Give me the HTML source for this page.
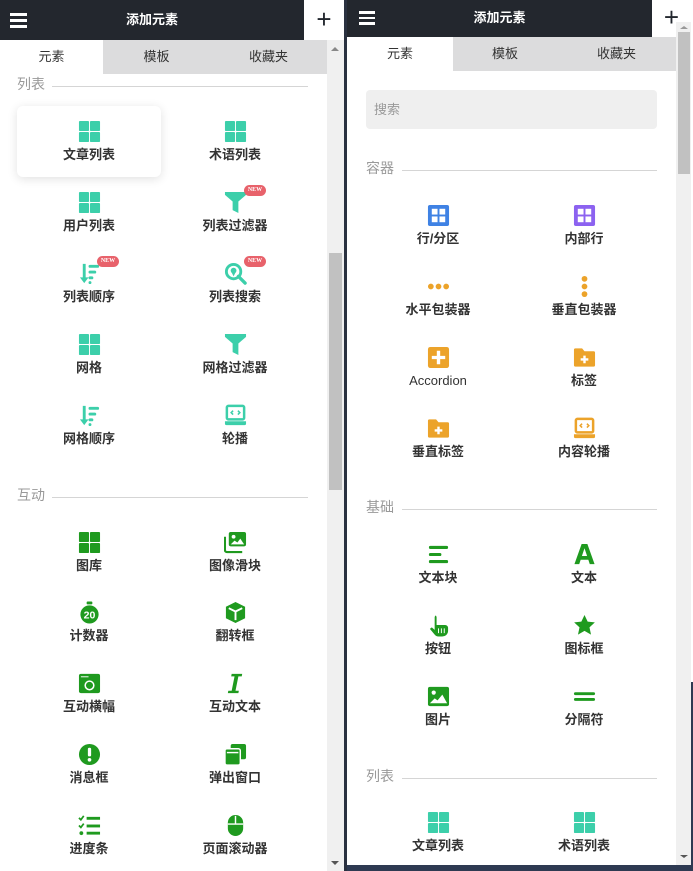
<!DOCTYPE html>
<html><head><meta charset="utf-8"><style>
*{margin:0;padding:0;box-sizing:border-box}
body{width:693px;height:871px;position:relative;overflow:hidden;background:#fff;font-family:"Liberation Sans","Noto Sans CJK SC",sans-serif}
.abs{position:absolute}
.hdr{background:#23272e;color:#fff;font-weight:bold;font-size:13px;text-align:center}
.plus{background:#fff;color:#23272e;font-size:26px;text-align:center;font-weight:300}
.tabs{background:#dcdcdd;font-size:13px;color:#333}
.tab{position:absolute;top:0;height:100%;text-align:center}
.sec{font-size:14px;color:#999}
.line{height:1px;background:#d5d5d5}
.it{position:absolute;width:120px;text-align:center}
.it svg{display:block;margin:1px auto 0;width:23px;height:23px}
.it span{display:block;margin-top:4px;font-size:13px;font-weight:bold;color:#333;line-height:16px}
.new{position:absolute;background:#e8626b;color:#fff;font-size:6px;font-weight:bold;border-radius:6px;width:22px;height:11px;line-height:11px;text-align:center;font-family:"Liberation Serif",serif}
.sb{background:#f0f0f0}
.th{background:#c1c1c1}
</style></head><body>
<svg width="0" height="0" style="position:absolute"><defs>
<g id="grid"><rect x="1" y="1" width="10.5" height="10.5" rx="1"/><rect x="12.5" y="1" width="10.5" height="10.5" rx="1"/><rect x="1" y="12.5" width="10.5" height="10.5" rx="1"/><rect x="12.5" y="12.5" width="10.5" height="10.5" rx="1"/></g>
<g id="funnel"><path d="M1 1h22v3l-8 7v12l-6-3v-9L1 4z"/></g>
<g id="sort"><path d="M5 2h3v14h3l-4.5 6L2 16h3z"/><rect x="11" y="3" width="11" height="3" rx="1.5"/><rect x="11" y="9" width="8" height="3" rx="1.5"/><rect x="11" y="15" width="5" height="3" rx="1.5"/><rect x="11" y="20" width="3" height="3" rx="1.5"/></g>
<g id="srch"><circle cx="10" cy="10" r="7.5" fill="none" stroke="currentColor" stroke-width="3"/><circle cx="10" cy="9" r="3"/><path d="M8 11l2 4 2-4z"/><path d="M15 15l7 7" stroke="currentColor" stroke-width="3.5" stroke-linecap="round"/></g>
<g id="laptop"><rect x="3" y="2" width="18" height="14" rx="1.5" fill="none" stroke="currentColor" stroke-width="2.6"/><path d="M9.5 7l-2 2 2 2M14.5 7l2 2-2 2" fill="none" stroke="currentColor" stroke-width="1.6"/><path d="M1 18h22v2.5a1.5 1.5 0 0 1-1.5 1.5h-19A1.5 1.5 0 0 1 1 20.5z"/></g>
</defs></svg>

<!-- LEFT PANEL -->
<div class="abs hdr" style="left:0;top:0;width:304px;height:40px;line-height:40px">添加元素</div>
<div class="abs" style="left:10px;top:13px;width:17px;height:2.5px;background:#fff"></div>
<div class="abs" style="left:10px;top:19px;width:17px;height:2.5px;background:#fff"></div>
<div class="abs" style="left:10px;top:25px;width:17px;height:2.5px;background:#fff"></div>
<div class="abs plus" style="left:304px;top:0;width:40px;height:40px;line-height:38px">+</div>
<div class="abs tabs" style="left:0;top:40px;width:327px;height:34px">
 <div class="tab" style="left:0;width:103px;background:#fff;line-height:34px">元素</div>
 <div class="tab" style="left:103px;width:107px;line-height:34px">模板</div>
 <div class="tab" style="left:210px;width:117px;line-height:34px">收藏夹</div>
</div>
<div class="abs sb" style="left:327px;top:40px;width:17px;height:831px"></div>
<div class="abs th" style="left:329px;top:253px;width:13px;height:237px"></div>
<div class="abs" style="left:331px;top:47px;border:4px solid transparent;border-bottom:4px solid #888;border-top:0"></div>
<div class="abs" style="left:331px;top:861px;border:4px solid transparent;border-top:4px solid #555;border-bottom:0"></div>
<div class="abs" style="left:344px;top:0;width:3px;height:871px;background:#2a3140"></div>

<div class="abs sec" style="left:17px;top:74px">列表</div>
<div class="abs line" style="left:52px;top:86px;width:256px"></div>
<div class="abs" style="left:17px;top:106px;width:144px;height:71px;background:#fff;border-radius:6px;box-shadow:0 2px 10px rgba(0,0,0,.12)"></div>

<div style="color:#3ccfaa;fill:#3ccfaa">
<div class="it" style="left:29px;top:119px"><svg viewBox="0 0 24 24"><use href="#grid"/></svg><span>文章列表</span></div>
<div class="it" style="left:175px;top:119px"><svg viewBox="0 0 24 24"><use href="#grid"/></svg><span>术语列表</span></div>
<div class="it" style="left:29px;top:190px"><svg viewBox="0 0 24 24"><use href="#grid"/></svg><span>用户列表</span></div>
<div class="it" style="left:175px;top:190px"><svg viewBox="0 0 24 24"><use href="#funnel"/></svg><span>列表过滤器</span></div>
<div class="it" style="left:29px;top:261px"><svg viewBox="0 0 24 24"><use href="#sort"/></svg><span>列表顺序</span></div>
<div class="it" style="left:175px;top:261px"><svg viewBox="0 0 24 24"><use href="#srch"/></svg><span>列表搜索</span></div>
<div class="it" style="left:29px;top:332px"><svg viewBox="0 0 24 24"><use href="#grid"/></svg><span>网格</span></div>
<div class="it" style="left:175px;top:332px"><svg viewBox="0 0 24 24"><use href="#funnel"/></svg><span>网格过滤器</span></div>
<div class="it" style="left:29px;top:403px"><svg viewBox="0 0 24 24"><use href="#sort"/></svg><span>网格顺序</span></div>
<div class="it" style="left:175px;top:403px"><svg viewBox="0 0 24 24"><use href="#laptop"/></svg><span>轮播</span></div>
</div>
<div class="new" style="left:244px;top:185px">NEW</div>
<div class="new" style="left:97px;top:256px">NEW</div>
<div class="new" style="left:244px;top:256px">NEW</div>

<div class="abs sec" style="left:17px;top:485px">互动</div>
<div class="abs line" style="left:52px;top:497px;width:256px"></div>
<div style="fill:#1f9a1f;color:#1f9a1f">
<div class="it" style="left:29px;top:530px"><svg viewBox="0 0 24 24"><use href="#grid"/></svg><span>图库</span></div>
<div class="it" style="left:175px;top:530px"><svg viewBox="0 0 24 24"><rect x="5" y="1" width="18" height="15" rx="2"/><path d="M1 6v14a2 2 0 0 0 2 2h16" fill="none" stroke="currentColor" stroke-width="2.2"/><circle cx="10" cy="6" r="2" fill="#fff"/><path d="M7 14l4-4 3 2 3-4 4 6z" fill="#fff"/></svg><span>图像滑块</span></div>
<div class="it" style="left:29px;top:600px"><svg viewBox="0 0 24 24"><circle cx="12" cy="14" r="9.5"/><rect x="9" y="0.5" width="6" height="3" rx="1"/><text x="12" y="18.5" font-size="11" font-weight="bold" fill="#fff" text-anchor="middle" font-family="Liberation Sans">20</text></svg><span>计数器</span></div>
<div class="it" style="left:175px;top:600px"><svg viewBox="0 0 24 24"><path d="M12 1l10 5v12l-10 5-10-5V6z"/><path d="M5 7.5l7 3.5 7-3.5M12 11v9" fill="none" stroke="#fff" stroke-width="2"/></svg><span>翻转框</span></div>
<div class="it" style="left:29px;top:671px"><svg viewBox="0 0 24 24"><rect x="1" y="2" width="22" height="20" rx="2"/><path d="M3 5h8" stroke="#fff" stroke-width="1"/><circle cx="12" cy="14" r="4.5" fill="none" stroke="#fff" stroke-width="1.6"/></svg><span>互动横幅</span></div>
<div class="it" style="left:175px;top:671px"><svg viewBox="0 0 24 24"><path d="M8 2h11l-.5 2.5h-3.5l-3 15h3.5l-.5 2.5H4l.5-2.5H8l3-15H7.5z"/></svg><span>互动文本</span></div>
<div class="it" style="left:29px;top:742px"><svg viewBox="0 0 24 24"><circle cx="12" cy="12" r="11"/><rect x="10.3" y="5" width="3.4" height="9" rx="1.5" fill="#fff"/><circle cx="12" cy="17.5" r="1.9" fill="#fff"/></svg><span>消息框</span></div>
<div class="it" style="left:175px;top:742px"><svg viewBox="0 0 24 24"><rect x="7" y="1" width="16" height="16" rx="2"/><rect x="1" y="6" width="16" height="17" rx="2" stroke="#fff" stroke-width="1.5"/><path d="M3 10h12" stroke="#fff" stroke-width="1.5"/></svg><span>弹出窗口</span></div>
<div class="it" style="left:29px;top:813px"><svg viewBox="0 0 24 24"><path d="M1 4l2 2 3-4M1 12l2 2 3-4" fill="none" stroke="currentColor" stroke-width="1.8"/><circle cx="3.5" cy="20" r="2"/><rect x="9" y="3" width="14" height="3"/><rect x="9" y="11" width="14" height="3"/><rect x="9" y="18.5" width="14" height="3"/></svg><span>进度条</span></div>
<div class="it" style="left:175px;top:813px"><svg viewBox="0 0 24 24"><rect x="4" y="1" width="16" height="22" rx="8"/><path d="M12 2v8M4 10.5h16" stroke="#fff" stroke-width="1.5"/></svg><span>页面滚动器</span></div>
</div>

<!-- RIGHT PANEL -->
<div class="abs" style="left:347px;top:0;width:346px;height:871px;background:#fff"></div>
<div class="abs hdr" style="left:347px;top:0;width:305px;height:37px;line-height:35px">添加元素</div>
<div class="abs" style="left:359px;top:11px;width:16px;height:2.5px;background:#fff"></div>
<div class="abs" style="left:359px;top:16.5px;width:16px;height:2.5px;background:#fff"></div>
<div class="abs" style="left:359px;top:22px;width:16px;height:2.5px;background:#fff"></div>
<div class="abs plus" style="left:652px;top:0;width:39px;height:37px;line-height:34px">+</div>
<div class="abs tabs" style="left:347px;top:37px;width:329px;height:34px">
 <div class="tab" style="left:0;width:106px;background:#fff;line-height:34px">元素</div>
 <div class="tab" style="left:106px;width:104px;line-height:34px">模板</div>
 <div class="tab" style="left:210px;width:119px;line-height:34px">收藏夹</div>
</div>
<div class="abs sb" style="left:676px;top:22px;width:15px;height:843px"></div>
<div class="abs th" style="left:678px;top:32px;width:12px;height:142px"></div>
<div class="abs" style="left:680px;top:26px;border:4px solid transparent;border-bottom:3px solid #999;border-top:0"></div>
<div class="abs" style="left:680px;top:855px;border:4px solid transparent;border-top:3px solid #555;border-bottom:0"></div>
<div class="abs" style="left:691px;top:0;width:2px;height:871px;background:#fff"></div>
<div class="abs" style="left:691px;top:682px;width:2px;height:189px;background:#2e3a52"></div>
<div class="abs" style="left:347px;top:865px;width:346px;height:6px;background:#2e3a52"></div>

<div class="abs" style="left:366px;top:90px;width:291px;height:39px;background:#efefef;border-radius:4px;font-size:13px;color:#999;line-height:39px;padding-left:8px">搜索</div>
<div class="abs sec" style="left:366px;top:158px">容器</div>
<div class="abs line" style="left:402px;top:170px;width:255px"></div>

<div class="it" style="left:378px;top:203px"><svg viewBox="0 0 24 24"><rect x="1" y="1" width="22" height="22" rx="2" fill="#3f82e4"/><rect x="5" y="5" width="6" height="6" fill="#fff"/><rect x="13" y="5" width="6" height="6" fill="#fff"/><rect x="5" y="13" width="6" height="6" fill="#fff"/><rect x="13" y="13" width="6" height="6" fill="#fff"/></svg><span>行/分区</span></div>
<div class="it" style="left:524px;top:203px"><svg viewBox="0 0 24 24"><rect x="1" y="1" width="22" height="22" rx="2" fill="#8c62f0"/><rect x="5" y="5" width="6" height="6" fill="#fff"/><rect x="13" y="5" width="6" height="6" fill="#fff"/><rect x="5" y="13" width="6" height="6" fill="#fff"/><rect x="13" y="13" width="6" height="6" fill="#fff"/></svg><span>内部行</span></div>
<div style="fill:#eca32a;color:#eca32a">
<div class="it" style="left:378px;top:274px"><svg viewBox="0 0 24 24"><circle cx="4" cy="12" r="3"/><circle cx="12" cy="12" r="3"/><circle cx="20" cy="12" r="3"/></svg><span>水平包装器</span></div>
<div class="it" style="left:524px;top:274px"><svg viewBox="0 0 24 24"><circle cx="12" cy="4" r="3"/><circle cx="12" cy="12" r="3"/><circle cx="12" cy="20" r="3"/></svg><span>垂直包装器</span></div>
<div class="it" style="left:378px;top:345px"><svg viewBox="0 0 24 24"><rect x="1" y="1" width="22" height="22" rx="2.5"/><path d="M12 5v14M5 12h14" stroke="#fff" stroke-width="3.5"/></svg><span style="font-weight:normal">Accordion</span></div>
<div class="it" style="left:524px;top:345px"><svg viewBox="0 0 24 24"><path d="M1 4a1.5 1.5 0 0 1 1.5-1.5h7l2.5 3h9.5A1.5 1.5 0 0 1 23 7v13a1.5 1.5 0 0 1-1.5 1.5h-19A1.5 1.5 0 0 1 1 20z"/><path d="M12 10v8M8 14h8" stroke="#fff" stroke-width="2.5"/></svg><span>标签</span></div>
<div class="it" style="left:378px;top:416px"><svg viewBox="0 0 24 24"><path d="M1 4a1.5 1.5 0 0 1 1.5-1.5h7l2.5 3h9.5A1.5 1.5 0 0 1 23 7v13a1.5 1.5 0 0 1-1.5 1.5h-19A1.5 1.5 0 0 1 1 20z"/><path d="M12 10v8M8 14h8" stroke="#fff" stroke-width="2.5"/></svg><span>垂直标签</span></div>
<div class="it" style="left:524px;top:416px"><svg viewBox="0 0 24 24"><use href="#laptop"/></svg><span>内容轮播</span></div>
</div>

<div class="abs sec" style="left:366px;top:497px">基础</div>
<div class="abs line" style="left:402px;top:509px;width:255px"></div>
<div style="fill:#1f9a1f;color:#1f9a1f">
<div class="it" style="left:378px;top:542px"><svg viewBox="0 0 24 24"><rect x="2" y="3" width="20" height="3.2" rx="1.5"/><rect x="2" y="10.4" width="13" height="3.2" rx="1.5"/><rect x="2" y="17.8" width="20" height="3.2" rx="1.5"/></svg><span>文本块</span></div>
<div class="it" style="left:524px;top:542px"><svg viewBox="0 0 24 24"><path d="M9 1h6l7.5 21h-5l-1.5-4.5H8L6.5 22h-5zM9.3 13.5h5.4L12 5.5z" fill-rule="evenodd"/></svg><span>文本</span></div>
<div class="it" style="left:378px;top:613px"><svg viewBox="0 0 24 24"><path d="M8 1.5a2 2 0 0 1 2 2v8h9a3 3 0 0 1 3 3v3a6 6 0 0 1-6 6h-4a5 5 0 0 1-4-2l-5-6 2-1.5 3 2.5V3.5a2 2 0 0 1 2-2z"/><path d="M12 15v5M15 15v5M18 15v5" stroke="#fff" stroke-width="1"/></svg><span>按钮</span></div>
<div class="it" style="left:524px;top:613px"><svg viewBox="0 0 24 24"><path d="M12 1l3.3 7 7.5.8-5.6 5.1 1.6 7.6L12 17.6l-6.8 3.9 1.6-7.6L1.2 8.8l7.5-.8z"/></svg><span>图标框</span></div>
<div class="it" style="left:378px;top:684px"><svg viewBox="0 0 24 24"><rect x="1" y="2" width="22" height="20" rx="2"/><circle cx="7" cy="8" r="2.2" fill="#fff"/><path d="M3 19l5-5 3 2 5-6 5 9z" fill="#fff"/></svg><span>图片</span></div>
<div class="it" style="left:524px;top:684px"><svg viewBox="0 0 24 24"><rect x="1" y="7.5" width="22" height="3" rx="1.5"/><rect x="1" y="13.5" width="22" height="3" rx="1.5"/></svg><span>分隔符</span></div>
</div>

<div class="abs sec" style="left:366px;top:766px">列表</div>
<div class="abs line" style="left:402px;top:778px;width:255px"></div>
<div style="fill:#3ccfaa">
<div class="it" style="left:378px;top:810px"><svg viewBox="0 0 24 24"><use href="#grid"/></svg><span>文章列表</span></div>
<div class="it" style="left:524px;top:810px"><svg viewBox="0 0 24 24"><use href="#grid"/></svg><span>术语列表</span></div>
</div>
</body></html>
